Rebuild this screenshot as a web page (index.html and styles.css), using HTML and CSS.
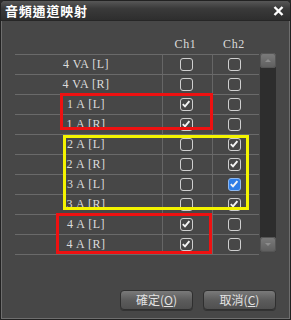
FILE: index.html
```html
<!DOCTYPE html>
<html>
<head>
  <meta charset="utf-8">
  <title>音頻通道映射</title>
  <link rel="stylesheet" href="styles.css">
</head>
<body>
  <div class="window">
    <div class="titlebar">
      <span class="title">音頻通道映射</span>
      <svg class="close" width="11" height="10" viewBox="0 0 11 10">
        <path d="M1.5 1 L9.5 9 M9.5 1 L1.5 9" stroke="#fff" stroke-width="2.4" fill="none"/>
      </svg>
    </div>

    <div class="content">
      <div class="list">
        <div class="grid">
          <div class="head"></div>
          <div class="head">Ch1</div>
          <div class="head">Ch2</div>

          <div class="cell label">4 VA [L]</div>
          <div class="cell ch"><span class="box"></span></div>
          <div class="cell ch"><span class="box"></span></div>

          <div class="cell label">4 VA [R]</div>
          <div class="cell ch"><span class="box"></span></div>
          <div class="cell ch"><span class="box"></span></div>

          <div class="cell label">1 A [L]</div>
          <div class="cell ch"><span class="box checked"><svg viewBox="0 0 12 12"><path d="M2.8 6.2 L5 8.4 L9.4 3.2"/></svg></span></div>
          <div class="cell ch"><span class="box"></span></div>

          <div class="cell label">1 A [R]</div>
          <div class="cell ch"><span class="box checked"><svg viewBox="0 0 12 12"><path d="M2.8 6.2 L5 8.4 L9.4 3.2"/></svg></span></div>
          <div class="cell ch"><span class="box"></span></div>

          <div class="cell label">2 A [L]</div>
          <div class="cell ch"><span class="box"></span></div>
          <div class="cell ch"><span class="box checked"><svg viewBox="0 0 12 12"><path d="M2.8 6.2 L5 8.4 L9.4 3.2"/></svg></span></div>

          <div class="cell label">2 A [R]</div>
          <div class="cell ch"><span class="box"></span></div>
          <div class="cell ch"><span class="box checked"><svg viewBox="0 0 12 12"><path d="M2.8 6.2 L5 8.4 L9.4 3.2"/></svg></span></div>

          <div class="cell label">3 A [L]</div>
          <div class="cell ch"><span class="box"></span></div>
          <div class="cell ch"><span class="box checked focus"><svg viewBox="0 0 12 12"><path d="M2.8 6.2 L5 8.4 L9.4 3.2"/></svg></span></div>

          <div class="cell label">3 A [R]</div>
          <div class="cell ch"><span class="box"></span></div>
          <div class="cell ch"><span class="box checked"><svg viewBox="0 0 12 12"><path d="M2.8 6.2 L5 8.4 L9.4 3.2"/></svg></span></div>

          <div class="cell label">4 A [L]</div>
          <div class="cell ch"><span class="box checked"><svg viewBox="0 0 12 12"><path d="M2.8 6.2 L5 8.4 L9.4 3.2"/></svg></span></div>
          <div class="cell ch"><span class="box"></span></div>

          <div class="cell label last">4 A [R]</div>
          <div class="cell ch last"><span class="box checked"><svg viewBox="0 0 12 12"><path d="M2.8 6.2 L5 8.4 L9.4 3.2"/></svg></span></div>
          <div class="cell ch last"><span class="box"></span></div>
        </div>

        <div class="scrollbar">
          <div class="sb-btn"><span class="arrow up"></span></div>
          <div class="sb-btn"><span class="arrow down"></span></div>
        </div>
      </div>

      <div class="buttons">
        <button class="btn">確定(<u>O</u>)</button>
        <button class="btn">取消(<u>C</u>)</button>
      </div>
    </div>

    <!-- annotation frames drawn over the list -->
    <div class="mark red mark1"></div>
    <div class="mark yellow mark2"></div>
    <div class="mark red mark3"></div>
  </div>
</body>
</html>
```

FILE: styles.css
```css
body {
  margin: 0;
  background: #2a2a2a;
}

.window {
  position: relative;
  width: 291px;
  height: 320px;
  box-sizing: border-box;
  background: #474747;
  border: 1px solid #222;
  border-radius: 5px 5px 0 0;
  box-shadow: inset 1px 0 0 #6e6e6e, inset -1px -1px 0 #6e6e6e;
  overflow: hidden;
}

.titlebar {
  height: 19px;
  display: flex;
  align-items: center;
  justify-content: space-between;
  padding: 0 6px 0 4px;
  background: linear-gradient(#575757, #3a3a3a 40%, #2e2e2e);
  border-bottom: 1px solid #262626;
}

.title {
  font-family: "Noto Sans CJK TC", "Noto Sans CJK SC", sans-serif;
  font-weight: bold;
  font-size: 13px;
  color: #fff;
  letter-spacing: 0.8px;
}

.close {
  display: block;
}

.content {
  padding: 13px 14px 0 14px;
}

.list {
  display: flex;
  align-items: flex-start;
}

.grid {
  display: grid;
  grid-template-columns: 147px 50px 47px;
  font-family: "Liberation Serif", "DejaVu Serif", serif;
  font-size: 12px;
  color: #dcdcdc;
}

.head {
  height: 20px;
  display: flex;
  align-items: center;
  justify-content: center;
  letter-spacing: 0.6px;
  padding-right: 3px;
}

.cell {
  height: 20px;
  box-sizing: border-box;
  border-top: 1px solid #6a6a6a;
  display: flex;
  align-items: center;
  justify-content: center;
}

.cell.last {
  height: 21px;
  border-bottom: 1px solid #6a6a6a;
}

.label {
  padding-right: 5px;
  letter-spacing: 0.5px;
}

.ch {
  border-left: 1px solid #666;
}

.box {
  width: 13px;
  height: 13px;
  box-sizing: border-box;
  border: 1.5px solid #cfcfcf;
  border-radius: 3px;
  margin-left: -3px;
  position: relative;
}

.box svg {
  position: absolute;
  left: -1px;
  top: -1px;
  width: 12px;
  height: 12px;
}

.box svg path {
  fill: none;
  stroke: #f4f4f4;
  stroke-width: 1.9;
}

.box.focus {
  background: #2f7ee6;
  border-color: #8fb9f0;
}

.scrollbar {
  width: 16px;
  height: 199px;
  margin-top: 19px;
  margin-left: 1px;
  background: #2d2d2d;
  border-radius: 2px;
  display: flex;
  flex-direction: column;
  justify-content: space-between;
}

.sb-btn {
  height: 15px;
  border-radius: 3px;
  background: linear-gradient(#7c7c7c, #5e5e5e);
  box-shadow: inset 0 0 0 1px #555;
  display: flex;
  align-items: center;
  justify-content: center;
}

.arrow {
  width: 0;
  height: 0;
  border-left: 3px solid transparent;
  border-right: 3px solid transparent;
}

.arrow.up {
  border-bottom: 3px solid #8d8d8d;
}

.arrow.down {
  border-top: 3px solid #8d8d8d;
}

.buttons {
  display: flex;
  justify-content: flex-end;
  gap: 10px;
  margin-top: 35px;
}

.btn {
  width: 73px;
  height: 20px;
  padding: 0;
  font-family: "Noto Sans CJK TC", "Noto Sans CJK SC", sans-serif;
  font-size: 12px;
  line-height: 18px;
  color: #e2e2e2;
  background: linear-gradient(#7a7a7a, #5c5c5c 50%, #505050);
  border: 1px solid #2f2f2f;
  border-radius: 4px;
  box-shadow: 0 1px 0 #333;
}

.btn u {
  text-decoration-thickness: 1px;
}

.mark {
  position: absolute;
  box-sizing: border-box;
  border: 3px solid;
}

.red {
  border-color: #ee1111;
}

.yellow {
  border-color: #f4f400;
}

.mark1 {
  left: 59px;
  top: 92px;
  width: 153px;
  height: 37px;
}

.mark2 {
  left: 62px;
  top: 134px;
  width: 186px;
  height: 75px;
}

.mark3 {
  left: 55px;
  top: 212px;
  width: 156px;
  height: 41px;
}
```
